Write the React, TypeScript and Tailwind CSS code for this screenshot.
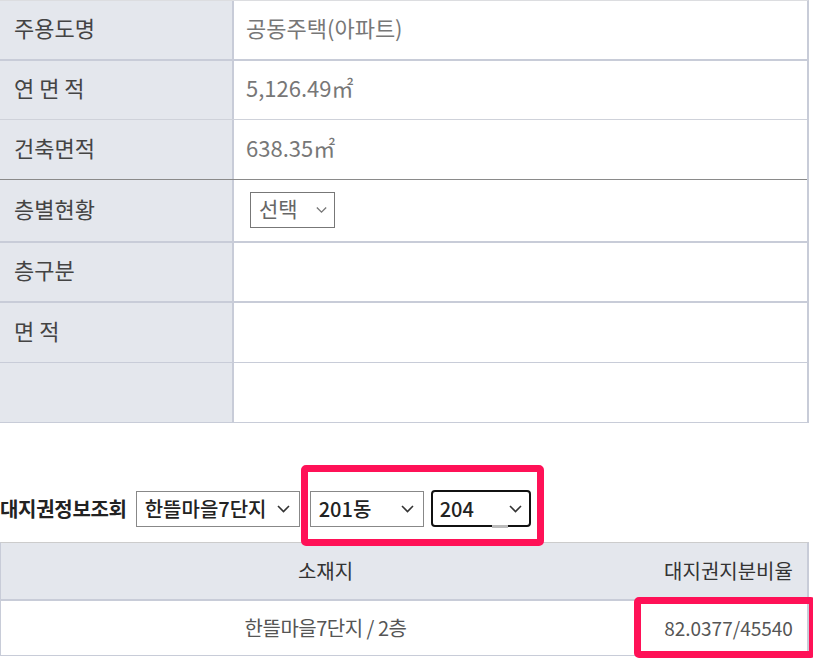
function Chevron({ className = "" }: { className?: string }) {
  return (
    <svg width="13" height="8" viewBox="0 0 13 8" className={className} fill="none">
      <polyline points="1,1 6.5,6.5 12,1" stroke="currentColor" strokeWidth="1.6" />
    </svg>
  );
}

const rows = [
  { label: "주용도명", value: "공동주택(아파트)", h: "h-[60px]", border: "border-b-2 border-[#c8ccd8]" },
  { label: "연 면 적", value: "5,126.49㎡", h: "h-[59px]", border: "border-b border-[#cfd2da]" },
  { label: "건축면적", value: "638.35㎡", h: "h-[60px]", border: "border-b border-[#8a8a8a]" },
  { label: "층별현황", value: "select", h: "h-[63px]", border: "border-b-2 border-[#c8ccd8]" },
  { label: "층구분", value: "", h: "h-[60px]", border: "border-b-2 border-[#c8ccd8]" },
  { label: "면 적", value: "", h: "h-[60px]", border: "border-b border-[#c8ccd8]" },
  { label: "", value: "", h: "h-[60px]", border: "border-b border-[#c8ccd8]" },
];

export default function App() {
  return (
    <div
      className="w-[813px] h-[661px] bg-white overflow-hidden relative"
      style={{ fontFamily: '"Noto Sans CJK KR", "Noto Sans", sans-serif' }}
    >
      {/* 건축물 정보 */}
      <div className="w-[809px] border-t border-[#dcdde0] border-r-2 border-r-[#c8ccd8]">
        {rows.map((r, i) => (
          <div key={i} className={`flex ${r.h} ${r.border}`}>
            <div className="w-[234px] shrink-0 bg-[#e4e7ed] border-r-2 border-[#c8ccd8] pl-[14px] pb-[5px] flex items-center text-[22px] text-[#444]">
              {r.label}
            </div>
            <div className="flex-1 pl-[12px] pb-[5px] flex items-center text-[22px] text-[#777]">
              {r.value === "select" ? (
                <div className="ml-[4px] mt-[3px] w-[85px] h-[36px] border border-[#777] flex items-center justify-between pl-[8px] pr-[7px] text-[21px] text-[#666]">
                  <span className="-mt-[2px]">선택</span>
                  <Chevron className="text-[#777] w-[11px]" />
                </div>
              ) : (
                r.value
              )}
            </div>
          </div>
        ))}
      </div>

      {/* 대지권정보조회 */}
      <div className="flex items-center mt-[67px] h-[37px]">
        <span className="text-[20px] font-bold text-[#222] mr-[9px] tracking-[-0.3px]">대지권정보조회</span>
        <div className="w-[164px] h-[36px] border border-[#888] flex items-center justify-between pl-[8px] pr-[9px] text-[20px] font-medium text-[#222] mr-[10px]">
          <span>한뜰마을7단지</span>
          <Chevron className="text-[#333]" />
        </div>
        <div className="w-[114px] h-[36px] border border-[#888] flex items-center justify-between pl-[8px] pr-[9px] text-[20px] font-medium text-[#222] mr-[7px]">
          <span>201동</span>
          <Chevron className="text-[#333]" />
        </div>
        <div className="relative w-[100px] h-[37px] border-2 border-[#111] rounded-[4px] flex items-center justify-between pl-[7px] pr-[7px] text-[20px] font-medium text-[#222]">
          <span>204</span>
          <Chevron className="text-[#333]" />
          <div className="absolute -bottom-[3px] left-[59px] w-[16px] h-[3px] bg-[#bbb]" />
        </div>
      </div>

      {/* 대지권 표 */}
      <div className="mt-[15px] w-[809px] border-t border-[#cccccc] border-l border-l-[#c8ccd8] border-r-2 border-r-[#c8ccd8] border-b border-b-[#c8ccd8]">
        <div className="flex h-[58px] bg-[#e4e7ed] border-b-2 border-[#c8ccd8] items-center text-[20px] text-[#333]">
          <div className="w-[649px] text-center">소재지</div>
          <div className="flex-1 text-center">대지권지분비율</div>
        </div>
        <div className="flex h-[54px] items-center text-[20px] text-[#555]">
          <div className="w-[649px] text-center tracking-[-0.5px]">한뜰마을7단지 / 2층</div>
          <div className="flex-1 text-center text-[19px]">82.0377/45540</div>
        </div>
      </div>

      {/* 강조 표시 */}
      <div className="absolute left-[301px] top-[465px] w-[243px] h-[81px] border-[7px] border-[#ff1157] rounded-[5px]" />
      <div className="absolute left-[634px] top-[597px] w-[182px] h-[61px] border-[7px] border-[#ff1157] rounded-[5px]" />
    </div>
  );
}
